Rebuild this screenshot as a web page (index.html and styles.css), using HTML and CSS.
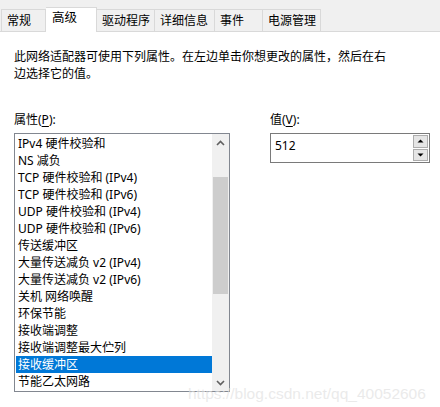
FILE: index.html
```html
<!DOCTYPE html>
<html>
<head>
<meta charset="utf-8">
<link rel="stylesheet" href="styles.css">
</head>
<body>
<div class="tabs">
  <div class="tab w1">常规</div>
  <div class="tab sel">高级</div>
  <div class="tab w3">驱动程序</div>
  <div class="tab w4">详细信息</div>
  <div class="tab w5">事件</div>
  <div class="tab w6">电源管理</div>
</div>
<div class="content">
  <p class="desc">此网络适配器可使用下列属性。在左边单击你想更改的属性，然后在右<br>边选择它的值。</p>
  <div class="cols">
    <div class="left">
      <div class="label">属性(<u>P</u>):</div>
      <div class="listbox">
        <div class="items">
          <div class="item">IPv4 硬件校验和</div>
          <div class="item">NS 减负</div>
          <div class="item">TCP 硬件校验和 (IPv4)</div>
          <div class="item">TCP 硬件校验和 (IPv6)</div>
          <div class="item">UDP 硬件校验和 (IPv4)</div>
          <div class="item">UDP 硬件校验和 (IPv6)</div>
          <div class="item">传送缓冲区</div>
          <div class="item">大量传送减负 v2 (IPv4)</div>
          <div class="item">大量传送减负 v2 (IPv6)</div>
          <div class="item">关机 网络唤醒</div>
          <div class="item">环保节能</div>
          <div class="item">接收端调整</div>
          <div class="item">接收端调整最大伫列</div>
          <div class="item selected">接收缓冲区</div>
          <div class="item">节能乙太网路</div>
        </div>
        <div class="scrollbar">
          <div class="arrow">
            <svg width="9" height="6" viewBox="0 0 9 6"><path d="M1 5 L4.5 1.5 L8 5" fill="none" stroke="#606060" stroke-width="1.6"/></svg>
          </div>
          <div class="track">
            <div class="thumb"></div>
          </div>
          <div class="arrow">
            <svg width="9" height="6" viewBox="0 0 9 6"><path d="M1 1 L4.5 4.5 L8 1" fill="none" stroke="#606060" stroke-width="1.6"/></svg>
          </div>
        </div>
      </div>
    </div>
    <div class="right">
      <div class="label">值(<u>V</u>):</div>
      <div class="valuebox">
        <div class="value">512</div>
        <div class="spin">
          <div class="spinbtn"><svg width="7" height="4" viewBox="0 0 7 4"><path d="M0.5 3.5 L3.5 0.5 L6.5 3.5 Z" fill="#000"/></svg></div>
          <div class="spinbtn"><svg width="7" height="4" viewBox="0 0 7 4"><path d="M0.5 0.5 L3.5 3.5 L6.5 0.5 Z" fill="#000"/></svg></div>
        </div>
      </div>
    </div>
  </div>
</div>
<div class="watermark">https://blog.csdn.net/qq_40052606</div>
</body>
</html>
```
FILE: styles.css
```css
html, body {
  margin: 0;
  padding: 0;
  background: #ffffff;
}
body {
  width: 440px;
  height: 407px;
  overflow: hidden;
  position: relative;
  font-family: "Noto Sans", "Noto Sans CJK SC", sans-serif;
  font-size: 12px;
  color: #000;
}
.tabs {
  display: flex;
  align-items: flex-end;
  height: 31px;
  background: #f0f0f0;
  border-bottom: 1px solid #d9d9d9;
  padding-left: 1px;
  box-sizing: content-box;
}
.tab {
  box-sizing: border-box;
  height: 22px;
  border: 1px solid #d9d9d9;
  border-bottom: none;
  border-left: none;
  background: #f0f0f0;
  padding-left: 5px;
  line-height: 21px;
  white-space: nowrap;
}
.tab.w1 { width: 45px; border-left: 1px solid #d9d9d9; }
.tab.sel {
  width: 51px;
  height: 25px;
  margin-bottom: -1px;
  background: #fff;
  border-left: none;
  padding-left: 6px;
  line-height: 20px;
  font-size: 12.5px;
}
.tab.w3 { width: 58px; }
.tab.w4 { width: 60px; }
.tab.w5 { width: 48px; }
.tab.w6 { width: 58px; }
.content {
  padding: 16px 10px 0 14px;
}
.desc {
  margin: 0;
  line-height: 17px;
}
.cols {
  display: grid;
  grid-template-columns: 216px 160px;
  column-gap: 40px;
  margin-top: 29px;
}
.label {
  line-height: 17px;
  margin-bottom: 5px;
}
.label u { text-decoration: underline; text-underline-offset: 2px; }
.listbox {
  box-sizing: border-box;
  height: 259px;
  border: 1px solid #828790;
  display: flex;
}
.items {
  flex: 1;
  padding: 1px 0 0 1px;
  overflow: hidden;
}
.item {
  height: 17px;
  line-height: 17px;
  padding-left: 2px;
  white-space: nowrap;
}
.item.selected {
  background: #0078d7;
  color: #fff;
}
.scrollbar {
  width: 17px;
  background: #f0f0f0;
  display: flex;
  flex-direction: column;
}
.arrow {
  height: 17px;
  display: flex;
  align-items: center;
  justify-content: center;
}
.track {
  flex: 1;
  padding-top: 26px;
}
.thumb {
  height: 117px;
  margin: 0 1px;
  background: #cdcdcd;
}
.valuebox {
  box-sizing: border-box;
  height: 30px;
  border: 1px solid #7a7a7a;
  display: flex;
}
.value {
  flex: 1;
  padding: 3px 0 0 4px;
  line-height: 17px;
}
.spin {
  width: 15px;
  padding: 1px 1px 1px 0;
  display: flex;
  flex-direction: column;
  gap: 1px;
}
.spinbtn {
  flex: 1;
  box-sizing: border-box;
  border: 1px solid #adadad;
  background: #e5e5e5;
  display: flex;
  align-items: center;
  justify-content: center;
}
.watermark {
  position: absolute;
  left: 188px;
  top: 385px;
  font-family: "Liberation Sans", Arial, sans-serif;
  font-size: 15.5px;
  color: rgba(225, 225, 225, 0.7);
  white-space: nowrap;
}
```
